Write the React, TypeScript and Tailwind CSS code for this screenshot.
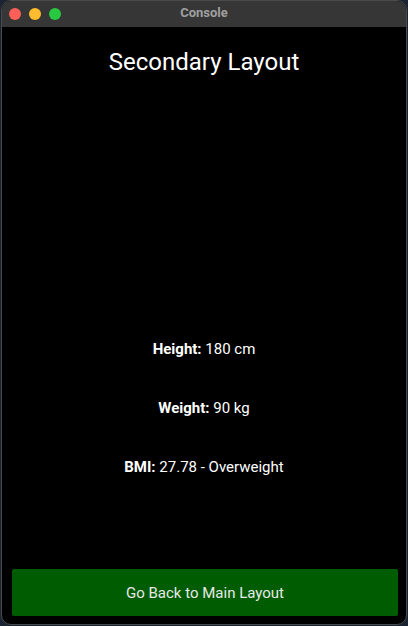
export default function App() {
  return (
    <div className="w-[408px] h-[626px] bg-[#1b2433] pl-[1px]" style={{ fontFamily: "Roboto, 'Liberation Sans', sans-serif" }}>
      <div className="w-[406px] h-[625px] rounded-[10px] border border-[#4a4a4a] bg-black overflow-hidden flex flex-col">
        <div className="h-[26px] bg-[#363636] flex items-center relative shrink-0">
          <div className="flex gap-[8px] pl-[7px] pb-[1px]">
            <span className="w-[12px] h-[12px] rounded-full bg-[#fe5f57]" />
            <span className="w-[12px] h-[12px] rounded-full bg-[#febc2e]" />
            <span className="w-[12px] h-[12px] rounded-full bg-[#28c840]" />
          </div>
          <div className="absolute inset-0 flex items-center justify-center pb-[2px] text-[13px] font-bold text-[#a0a0a0]">
            Console
          </div>
        </div>
        <div className="flex-1 flex flex-col text-white">
          <h1 className="text-[24px] text-center mt-[19px] leading-[32px]">Secondary Layout</h1>
          <div className="flex-1 flex flex-col items-center justify-end gap-[39px] text-[15px] pb-[92px]">
            <p className="leading-[20px]"><span className="font-bold">Height:</span> 180 cm</p>
            <p className="leading-[20px]"><span className="font-bold">Weight:</span> 90 kg</p>
            <p className="leading-[20px]"><span className="font-bold">BMI:</span> 27.78 - Overweight</p>
          </div>
          <div className="pl-[10px] pr-[8px] pb-[8px]">
            <button className="w-full h-[47px] bg-[#005c00] rounded-[2px] pt-[2px] text-[15px] text-[#e8e8e8]">
              Go Back to Main Layout
            </button>
          </div>
        </div>
      </div>
    </div>
  );
}
